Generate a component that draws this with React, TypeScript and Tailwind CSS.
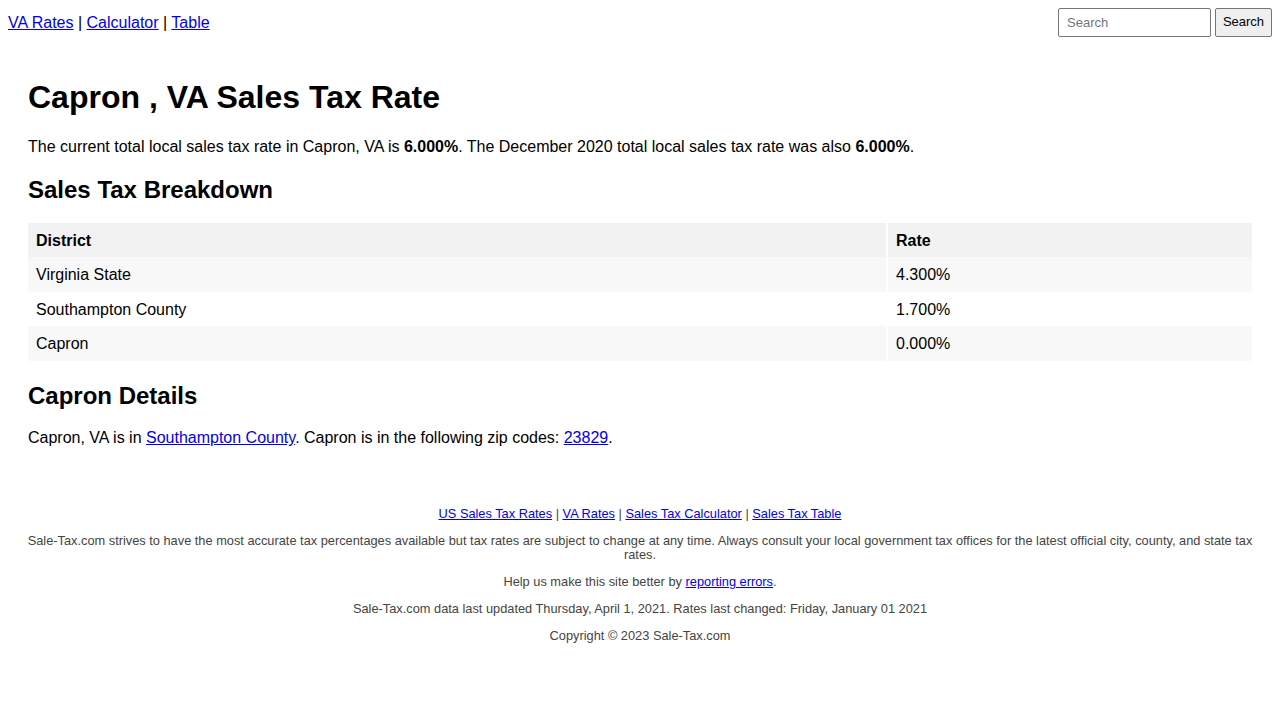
import React from 'react';

const rows = [
  { district: 'Virginia State', rate: '4.300%' },
  { district: 'Southampton County', rate: '1.700%' },
  { district: 'Capron', rate: '0.000%' },
];

const linkCls = 'text-[#0000ee] underline';

export default function App() {
  return (
    <div className="min-h-[720px] bg-white font-['Liberation_Sans',Arial,sans-serif] text-black">
      {/* Top nav */}
      <div className="flex items-center justify-between p-2 text-base leading-[1.15]">
        <div className="pt-[2px]">
          <a href="#" className={linkCls}>VA Rates</a> | <a href="#" className={linkCls}>Calculator</a> |{' '}
          <a href="#" className={linkCls}>Table</a>
        </div>
        <form className="flex items-center gap-1" onSubmit={(e) => e.preventDefault()}>
          <input
            type="text"
            placeholder="Search"
            className="h-[29px] w-[153px] rounded-[2px] border border-[#767676] px-2 text-[13px] placeholder:text-[#757575] outline-none"
          />
          <button
            type="submit"
            className="h-[29px] w-[57px] rounded-[2px] border border-[#767676] bg-[#efefef] text-[13px] text-black"
          >
            Search
          </button>
        </form>
      </div>

      <div className="px-[28px] pt-[13px]">
        <h1 className="mt-[21px] mb-[22px] text-[32px] font-bold leading-[1.15]">Capron , VA Sales Tax Rate</h1>
        <p className="text-base leading-[1.15]">
          The current total local sales tax rate in Capron, VA is <b>6.000%</b>. The December 2020 total local sales tax
          rate was also <b>6.000%</b>.
        </p>

        <h2 className="mt-[20px] mb-[19px] text-2xl font-bold leading-[1.15]">Sales Tax Breakdown</h2>
        <table className="w-full border-collapse text-left text-base leading-[18.5px]">
          <thead>
            <tr className="bg-[#f2f2f2]">
              <th className="w-[859px] px-2 pt-[9px] pb-[7px] font-bold">District</th>
              <th className="border-l-2 border-white px-2 pt-[9px] pb-[7px] font-bold">Rate</th>
            </tr>
          </thead>
          <tbody>
            {rows.map((r, i) => (
              <tr key={r.district} className={i % 2 === 0 ? 'bg-[#f8f8f8]' : 'bg-white'}>
                <td className="px-2 pt-[9px] pb-[7px]">{r.district}</td>
                <td className="border-l-2 border-white px-2 pt-[9px] pb-[7px]">{r.rate}</td>
              </tr>
            ))}
          </tbody>
        </table>

        <h2 className="mt-[21px] mb-[20px] text-2xl font-bold leading-[1.15]">Capron Details</h2>
        <p className="text-base leading-[1.15]">
          Capron, VA is in <a href="#" className={linkCls}>Southampton County</a>. Capron is in the following zip codes:{' '}
          <a href="#" className={linkCls}>23829</a>.
        </p>

        {/* Footer */}
        <div className="-mx-2 mt-[59px] text-center text-[12.8px] leading-[14px] text-[#444]">
          <p className="mb-[13px]">
            <a href="#" className={linkCls}>US Sales Tax Rates</a> | <a href="#" className={linkCls}>VA Rates</a> |{' '}
            <a href="#" className={linkCls}>Sales Tax Calculator</a> | <a href="#" className={linkCls}>Sales Tax Table</a>
          </p>
          <p className="mb-[13px]">
            Sale-Tax.com strives to have the most accurate tax percentages available but tax rates are subject to change at
            any time. Always consult your local government tax offices for the latest official city, county, and state tax
            rates.
          </p>
          <p className="mb-[13px]">
            Help us make this site better by <a href="#" className={linkCls}>reporting errors</a>.
          </p>
          <p className="mb-[13px]">
            Sale-Tax.com data last updated Thursday, April 1, 2021. Rates last changed: Friday, January 01 2021
          </p>
          <p>Copyright © 2023 Sale-Tax.com</p>
        </div>
      </div>
    </div>
  );
}
